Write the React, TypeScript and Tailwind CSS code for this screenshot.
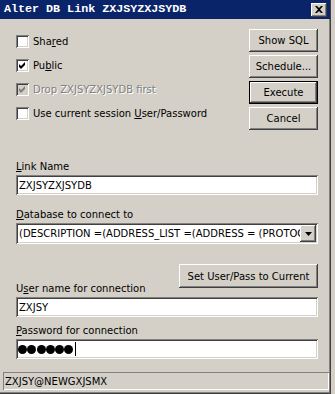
import type { ReactNode } from 'react'

const raised =
  'shadow-[inset_-1px_-1px_0_#404040,inset_1px_1px_0_#ffffff,inset_-2px_-2px_0_#808080,inset_2px_2px_0_#d4d0c8]'
const sunken =
  'shadow-[inset_1px_1px_0_#808080,inset_-1px_-1px_0_#ffffff,inset_2px_2px_0_#404040,inset_-2px_-2px_0_#d4d0c8]'

function CheckMark({ color }: { color: string }) {
  return (
    <svg width="7" height="7" viewBox="0 0 7 7">
      <path d="M0 2 L2 4 L6 0 L6 3 L2 7 L0 5 Z" fill={color} />
    </svg>
  )
}

function CheckRow({
  checked,
  disabled,
  children,
}: {
  checked?: boolean
  disabled?: boolean
  children: ReactNode
}) {
  return (
    <div className="h-6 flex items-center">
      <div
        className={`w-[13px] h-[13px] flex items-center justify-center ${sunken} ${
          disabled ? 'bg-[#d4d0c8]' : 'bg-white'
        }`}
      >
        {checked && <CheckMark color={disabled ? '#808080' : '#000000'} />}
      </div>
      <span
        className={`ml-[4px] leading-[13px] ${
          disabled ? 'text-[#808080] [text-shadow:1px_1px_0_#ffffff]' : ''
        }`}
      >
        {children}
      </span>
    </div>
  )
}

function Button({ children, isDefault }: { children: ReactNode; isDefault?: boolean }) {
  if (isDefault) {
    return (
      <div className="h-[23px] w-full border border-black bg-[#d4d0c8]">
        <div className={`h-full w-full flex items-center justify-center ${raised}`}>{children}</div>
      </div>
    )
  }
  return (
    <div className={`h-[23px] w-full flex items-center justify-center bg-[#d4d0c8] ${raised}`}>
      {children}
    </div>
  )
}

function Label({ children }: { children: ReactNode }) {
  return <div className="h-[16px] leading-[16px]">{children}</div>
}

function U({ children }: { children: ReactNode }) {
  return <span className="underline underline-offset-[1px]">{children}</span>
}

export default function App() {
  return (
    <div className="w-[335px] h-[394px] bg-[#d4d0c8] font-['DejaVu_Sans',sans-serif] text-[10px] text-black">
      <div className="w-[331px] h-[394px] flex flex-col border-r border-b border-[#404040]">
        {/* title bar */}
        <div className="h-[19px] shrink-0 bg-[#0a246a] flex items-center justify-between pl-[4px] pr-[3px]">
          <span className="font-['Liberation_Mono',monospace] font-bold text-[11.7px] text-white leading-none">
            Alter DB Link ZXJSYZXJSYDB
          </span>
          <div className={`w-[16px] h-[14px] bg-[#d4d0c8] flex items-center justify-center ${raised}`}>
            <svg width="8" height="7" viewBox="0 0 8 7">
              <path
                d="M0 0 H2 L4 2 L6 0 H8 L5 3.5 L8 7 H6 L4 5 L2 7 H0 L3 3.5 Z"
                fill="#000"
              />
            </svg>
          </div>
        </div>

        <div className="flex-1 flex flex-col border-r border-b border-[#808080] pl-[3px]">
          <div className="flex flex-col pl-[13px] pr-[11px] pt-[10px]">
            {/* options + buttons */}
            <div className="flex justify-between">
              <div className="flex flex-col">
                <CheckRow>
                  Sha<U>r</U>ed
                </CheckRow>
                <CheckRow checked>
                  Pu<U>b</U>lic
                </CheckRow>
                <CheckRow checked disabled>
                  Drop ZXJSYZXJSYDB first
                </CheckRow>
                <CheckRow>
                  Use current session <U>U</U>ser/Password
                </CheckRow>
              </div>
              <div className="w-[69px] flex flex-col gap-[3px]">
                <Button>Show SQL</Button>
                <Button>Schedule...</Button>
                <Button isDefault>Execute</Button>
                <Button>Cancel</Button>
              </div>
            </div>

            {/* link name */}
            <div className="mt-[29px]">
              <Label>
                <U>L</U>ink Name
              </Label>
              <div className={`h-[20px] bg-white flex items-center px-[3px] ${sunken}`}>ZXJSYZXJSYDB</div>
            </div>

            {/* database */}
            <div className="mt-[12px]">
              <Label>
                <U>D</U>atabase to connect to
              </Label>
              <div className={`h-[21px] bg-white flex items-center pl-[2px] pr-[2px] ${sunken}`}>
                <div className="flex-1 overflow-hidden whitespace-nowrap pl-[1px]">
                  (DESCRIPTION =(ADDRESS_LIST =(ADDRESS = (PROTOCOL = TCP)(HOST = 10.1.1.1)(PORT = 1521)))
                </div>
                <div className={`w-[16px] h-[17px] shrink-0 bg-[#d4d0c8] flex items-center justify-center ${raised}`}>
                  <svg width="7" height="4" viewBox="0 0 7 4">
                    <path d="M0 0 H7 L3.5 4 Z" fill="#000" />
                  </svg>
                </div>
              </div>
            </div>

            {/* user */}
            <div className="mt-[20px] h-[33px] flex justify-between">
              <div className="self-end">
                <Label>
                  U<U>s</U>er name for connection
                </Label>
              </div>
              <div className="self-start w-[139px]">
                <div className={`h-[24px] w-full flex items-center justify-center bg-[#d4d0c8] ${raised}`}>
                  Set User/Pass to Current
                </div>
              </div>
            </div>
            <div className={`h-[20px] bg-white flex items-center px-[3px] ${sunken}`}>ZXJSY</div>

            {/* password */}
            <div className="mt-[6px]">
              <Label>
                <U>P</U>assword for connection
              </Label>
              <div className={`h-[20px] bg-white flex items-center pl-[2px] ${sunken}`}>
                <div className="flex items-center gap-[0.3px]">
                  {[0, 1, 2, 3, 4, 5].map((i) => (
                    <span key={i} className="w-[9px] h-[9px] rounded-full bg-black" />
                  ))}
                </div>
                <span className="ml-[2px] w-px h-[14px] bg-black" />
              </div>
            </div>
          </div>

          {/* status bar */}
          <div className="mt-[13px] h-[18px] flex items-center px-[2px] shadow-[inset_1px_1px_0_#808080,inset_-1px_-1px_0_#ffffff]">
            ZXJSY@NEWGXJSMX
          </div>
        </div>
      </div>
    </div>
  )
}
